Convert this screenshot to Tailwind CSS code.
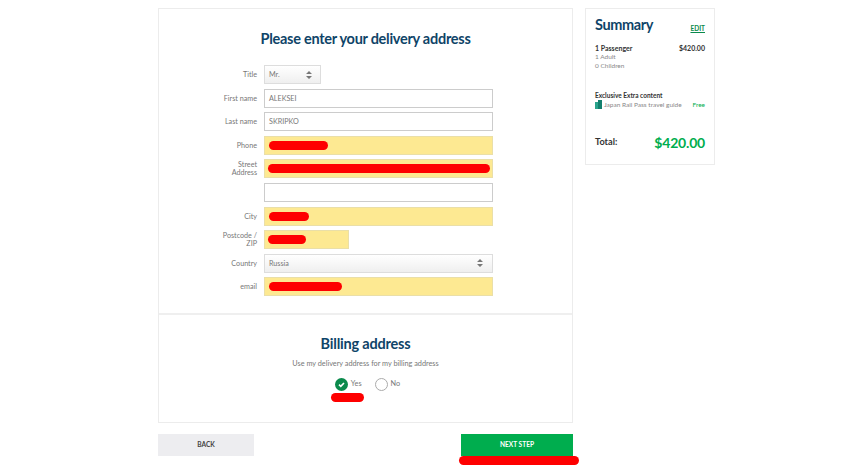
<!DOCTYPE html>
<html><head><meta charset="utf-8"><script src="https://cdn.jsdelivr.net/npm/@tailwindcss/browser@4"></script></head>
<body class="bg-white font-['Lato',sans-serif] overflow-hidden">
<div class="w-[850px] h-[465px] overflow-hidden pt-2 pl-[158px] flex gap-3 items-start">
  <div class="w-[415px] shrink-0">
    <div class="h-[415px] border border-[#ececec] flex flex-col">
      <div class="h-[306px] border-b-2 border-[#efefef] shrink-0">
        <h1 class="mt-[20px] h-[20px] leading-[20px] text-center text-[14.5px] tracking-[-0.27px] font-bold text-[#0f4468]">Please enter your delivery address</h1>
        <div class="mt-[16px] flex flex-col gap-[4.6px] text-[7.2px] text-[#777]">
          <div class="flex items-center h-[19px]"><span class="w-[105px] pr-[7px] pt-[2px] text-right">Title</span><div class="w-[57px] h-[19px] border border-[#ddd] bg-gradient-to-b from-white to-[#efefef] flex items-center justify-between pl-1 pr-[8px]"><span class="pt-[2px]">Mr.</span><svg width="6" height="8" viewBox="0 0 6 8" fill="#777"><path d="M3 0 6 3H0zM3 8 0 5h6z"/></svg></div></div>
          <div class="flex items-center h-[19px]"><span class="w-[105px] pr-[7px] pt-[2px] text-right">First name</span><div class="w-[229px] h-[19px] border border-[#ccc] flex items-center pl-1 pt-[2px]">ALEKSEI</div></div>
          <div class="flex items-center h-[19px]"><span class="w-[105px] pr-[7px] pt-[2px] text-right">Last name</span><div class="w-[229px] h-[19px] border border-[#ccc] flex items-center pl-1 pt-[2px]">SKRIPKO</div></div>
          <div class="flex items-center h-[19px]"><span class="w-[105px] pr-[7px] pt-[2px] text-right">Phone</span><div class="w-[229px] h-[19px] border border-[#eadfa8] bg-[#fde992] flex items-center pl-1"><div class="w-[59px] h-[9px] rounded-full bg-[#fe0000]"></div></div></div>
          <div class="flex items-center h-[19px]"><span class="w-[105px] pr-[7px] text-right leading-[8px]">Street<br>Address</span><div class="w-[229px] h-[19px] border border-[#eadfa8] bg-[#fde992] flex items-center pl-[3px]"><div class="w-[222px] h-[9px] rounded-full bg-[#fe0000]"></div></div></div>
          <div class="flex items-center h-[19px]"><span class="w-[105px] pr-[7px]"></span><div class="w-[229px] h-[19px] border border-[#ccc]"></div></div>
          <div class="flex items-center h-[19px]"><span class="w-[105px] pr-[7px] pt-[2px] text-right">City</span><div class="w-[229px] h-[19px] border border-[#eadfa8] bg-[#fde992] flex items-center pl-1"><div class="w-[40px] h-[9px] rounded-full bg-[#fe0000]"></div></div></div>
          <div class="flex items-center h-[19px]"><span class="w-[105px] pr-[7px] text-right leading-[8px]">Postcode /<br>ZIP</span><div class="w-[85px] h-[19px] border border-[#eadfa8] bg-[#fde992] flex items-center pl-[3px]"><div class="w-[38px] h-[9px] rounded-full bg-[#fe0000]"></div></div></div>
          <div class="flex items-center h-[19px]"><span class="w-[105px] pr-[7px] pt-[2px] text-right">Country</span><div class="w-[229px] h-[19px] border border-[#ddd] bg-gradient-to-b from-white to-[#efefef] flex items-center justify-between pl-1 pr-[9px]"><span class="pt-[2px]">Russia</span><svg width="6" height="8" viewBox="0 0 6 8" fill="#777"><path d="M3 0 6 3H0zM3 8 0 5h6z"/></svg></div></div>
          <div class="flex items-center h-[19px]"><span class="w-[105px] pr-[7px] pt-[2px] text-right">email</span><div class="w-[229px] h-[19px] border border-[#eadfa8] bg-[#fde992] flex items-center pl-1"><div class="w-[73px] h-[9px] rounded-full bg-[#fe0000]"></div></div></div>
        </div>
      </div>
      <div class="flex flex-col items-center">
        <h2 class="mt-[19px] h-[20px] leading-[20px] text-[14.5px] tracking-[-0.2px] font-bold text-[#0f4468]">Billing address</h2>
        <p class="mt-[5px] text-[7.3px] leading-[10px] text-[#777]">Use my delivery address for my billing address</p>
        <div class="mt-[9px] ml-[4px] flex items-start text-[7.3px] text-[#777] relative">
          <svg width="13" height="13" viewBox="0 0 13 13"><circle cx="6.5" cy="6.5" r="6.5" fill="#0b8a4c"/><path d="M4 6.7 5.8 8.4 9 5" fill="none" stroke="#fff" stroke-width="1.6"/></svg>
          <span class="ml-[3px] mr-[13px] mt-[1px] leading-[10px]">Yes</span>
          <svg width="13" height="13" viewBox="0 0 13 13"><circle cx="6.5" cy="6.5" r="6" fill="#fff" stroke="#aaa"/></svg>
          <span class="ml-[3px] mt-[1px] leading-[10px]">No</span>
          <div class="absolute left-[-4px] top-[15px] w-[33px] h-[9px] rounded-full bg-[#fe0000]"></div>
        </div>
      </div>
    </div>
    <div class="mt-[11px] flex justify-between items-start relative">
      <div class="w-[96px] h-[22px] bg-[#ededf0] flex items-center justify-center text-[6.6px] font-bold text-[#444]">BACK</div>
      <div class="w-[112px] h-[22px] bg-[#00ad4e] flex items-center justify-center text-[6.6px] font-bold text-white">NEXT STEP</div>
      <div class="absolute right-[-6px] top-[22px] w-[120px] h-[9px] rounded-full bg-[#fe0000]"></div>
    </div>
  </div>
  <div class="w-[130px] h-[157px] shrink-0 border border-[#ececec] px-[9px] text-[6.5px] text-[#888]">
    <div class="flex justify-between items-end mt-[7px] h-[18px]"><span class="text-[14.5px] tracking-[-0.4px] font-bold leading-[18px] text-[#0f4468]">Summary</span><span class="text-[6.5px] font-bold underline text-[#0b8a4c]">EDIT</span></div>
    <div class="mt-[10px] flex justify-between font-bold text-[7px] text-[#333] leading-[8px]"><span>1 Passenger</span><span>$420.00</span></div>
    <div class="leading-[9px]">1 Adult</div>
    <div class="leading-[9px]">0 Children</div>
    <div class="mt-[21px] font-bold text-[#333] leading-[9px]">Exclusive Extra content</div>
    <div class="flex items-center leading-[9px]"><svg width="8" height="9" viewBox="0 0 8 9" class="mr-[1px] shrink-0"><path d="M0 2h3v7H0z" fill="#2aa38c"/><path d="M3 0h4v9H3z" fill="#14806e"/></svg><span class="whitespace-nowrap">Japan Rail Pass travel guide</span><span class="ml-auto text-[#00ad4e]">Free</span></div>
    <div class="mt-[25px] flex justify-between items-center h-[16px]"><span class="text-[9.2px] font-bold text-[#333]">Total:</span><span class="text-[14px] tracking-[-0.2px] font-bold text-[#00ad4e]">$420.00</span></div>
  </div>
</div>
</body></html>
